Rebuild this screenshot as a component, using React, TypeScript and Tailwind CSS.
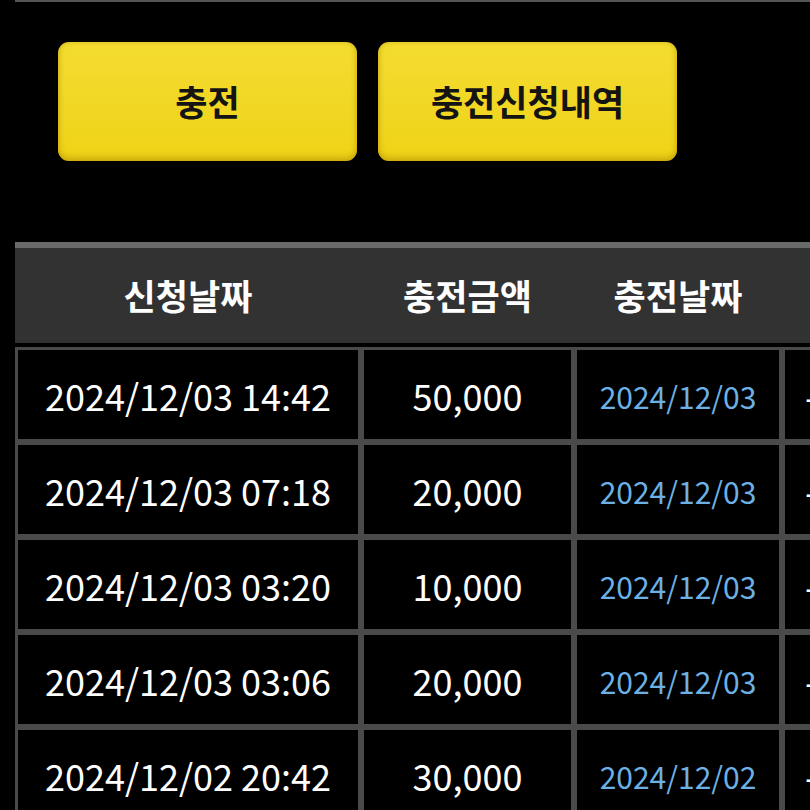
const ROWS = [
  { req: "2024/12/03 14:42", amount: "50,000", date: "2024/12/03" },
  { req: "2024/12/03 07:18", amount: "20,000", date: "2024/12/03" },
  { req: "2024/12/03 03:20", amount: "10,000", date: "2024/12/03" },
  { req: "2024/12/03 03:06", amount: "20,000", date: "2024/12/03" },
  { req: "2024/12/02 20:42", amount: "30,000", date: "2024/12/02" },
];

const FONT = "font-['Noto_Sans_CJK_KR','Noto_Sans',sans-serif]";

function YellowButton({ label }: { label: string }) {
  return (
    <button className="flex h-[119px] w-[299px] items-center justify-center rounded-[11px] bg-gradient-to-b from-[#f4dc30] to-[#efd316] text-[35px] font-bold text-[#141414] shadow-[inset_0_-4px_6px_rgba(160,120,0,0.35),inset_2px_0_4px_rgba(160,120,0,0.15),inset_-2px_0_4px_rgba(160,120,0,0.15)]">
      {label}
    </button>
  );
}

export default function App() {
  return (
    <div className={"h-[810px] w-[810px] overflow-hidden bg-black " + FONT}>
      {/* top rule */}
      <div className="ml-[15px] h-[2px] bg-[#555555]" />

      {/* actions */}
      <div className="ml-[58px] mt-[40px] flex gap-[21px]">
        <YellowButton label="충전" />
        <YellowButton label="충전신청내역" />
      </div>

      {/* table */}
      <div className="ml-[15px] mt-[81px] w-[1000px]">
        <div className="border-t-[6px] border-[#6a6a6a] bg-[#333233]">
          <div className="grid h-[95px] grid-cols-[346px_213px_208px_233px] items-center text-[35px] font-bold text-white">
            <div className="text-center">신청날짜</div>
            <div className="text-center">충전금액</div>
            <div className="text-center">충전날짜</div>
            <div />
          </div>
        </div>

        <div className="mt-[4px] grid grid-cols-[340px_207px_202px_230px] gap-[6px] bg-[#4a4a4a] p-[3px]">
          {ROWS.map((r, i) => (
            <div key={i} className="contents">
              <div className="flex h-[89px] items-center justify-center bg-black text-[36px] text-white">{r.req}</div>
              <div className="flex h-[89px] items-center justify-center bg-black text-[36px] text-white">{r.amount}</div>
              <div className="flex h-[89px] items-center justify-center bg-black pt-[4px] text-[30px] text-[#6cb0e4]">{r.date}</div>
              <div className="flex h-[89px] items-center bg-black pl-[20px] text-[36px] text-white">-</div>
            </div>
          ))}
        </div>
      </div>
    </div>
  );
}
